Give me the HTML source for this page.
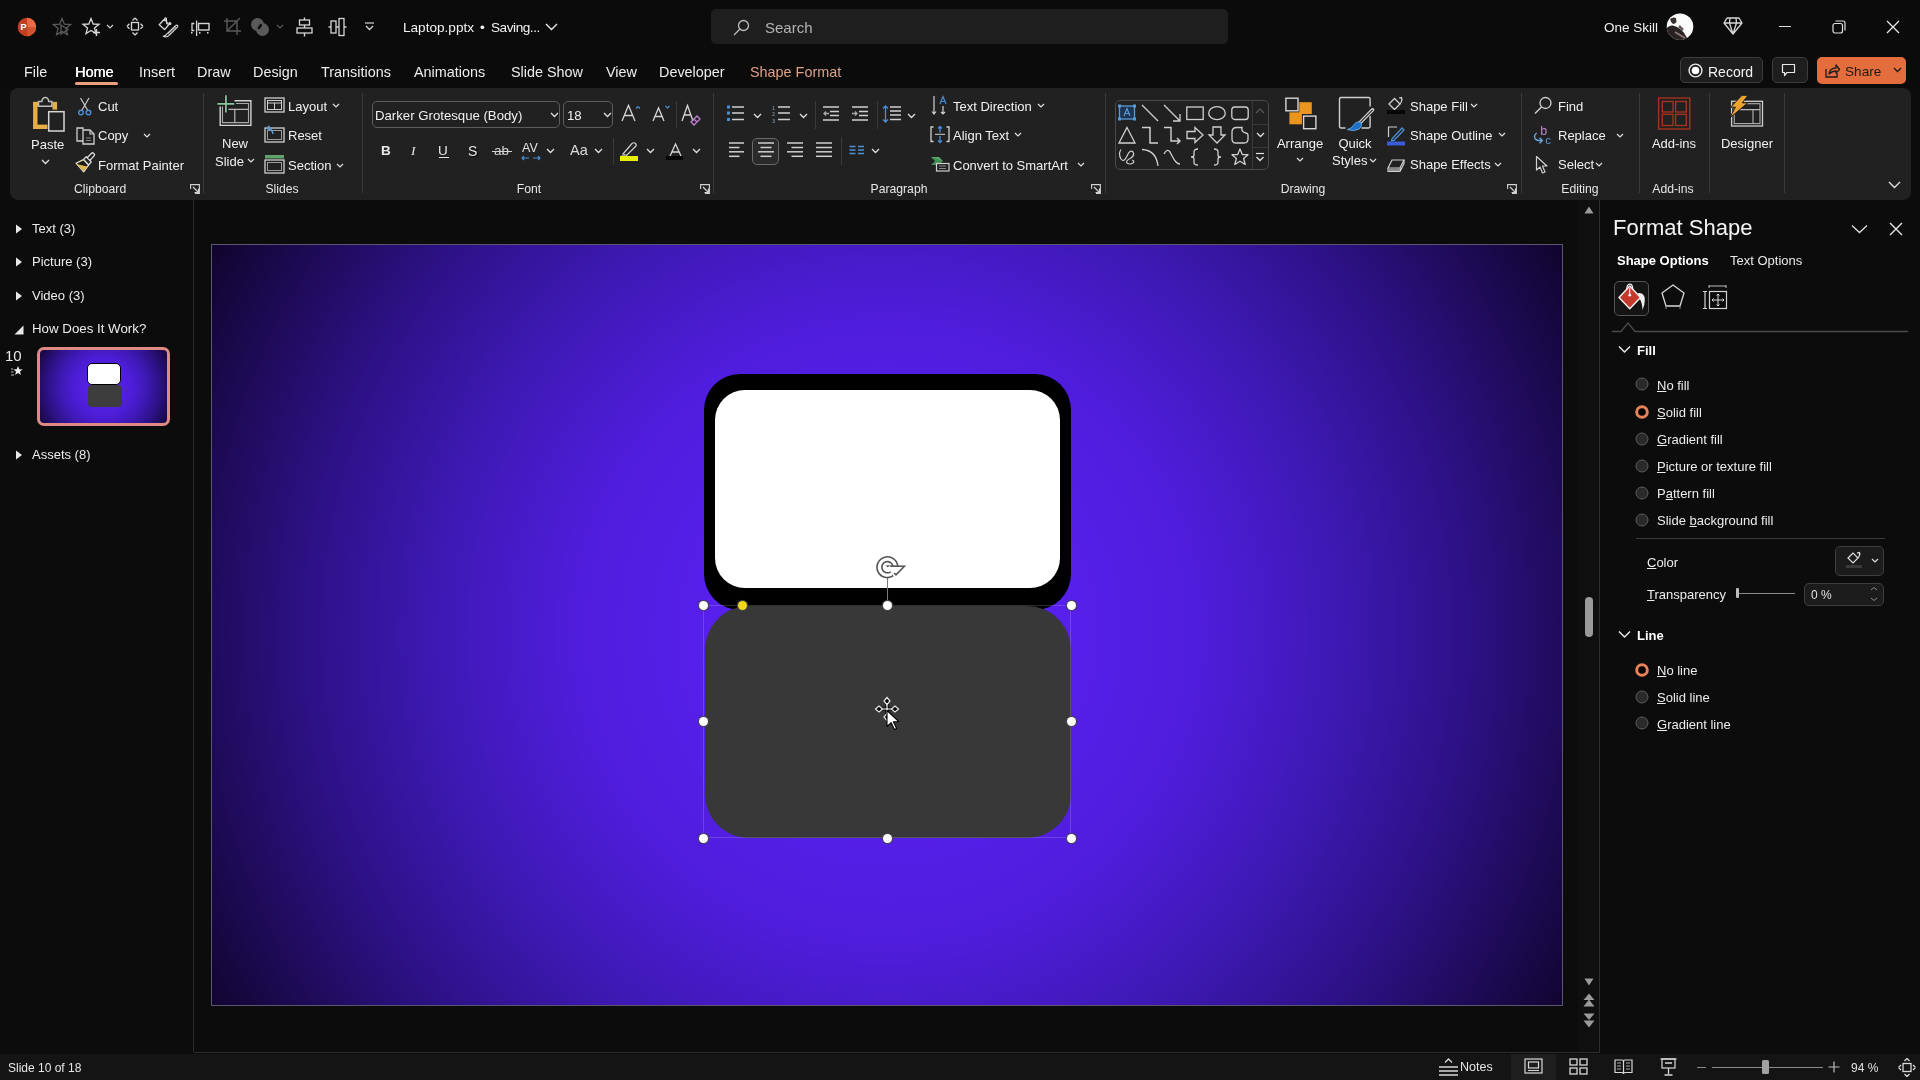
<!DOCTYPE html>
<html><head><meta charset="utf-8"><style>
html,body{margin:0;padding:0;width:1920px;height:1080px;overflow:hidden;background:#0c0c0c;}
body{position:relative;font-family:"Liberation Sans",sans-serif;}
.t{position:absolute;white-space:nowrap;line-height:1;font-family:"Liberation Sans",sans-serif;will-change:transform;}
.r{position:absolute;display:block;}
svg.r{overflow:visible}
</style></head><body>
<div class="r" style="left:0px;top:0px;width:1920px;height:88px;background:#0b0b0b"></div>
<div class="r" style="left:0px;top:88px;width:1920px;height:992px;background:#0c0c0c"></div>
<svg class="r" style="left:17px;top:17px;" width="20" height="20" viewBox="0 0 20 20"><circle cx="10" cy="10" r="9.2" fill="#c43e1c"/><path d="M10 0.8 A9.2 9.2 0 0 1 19.2 10 L10 10Z" fill="#ed6c47"/><path d="M19.2 10 A9.2 9.2 0 0 1 10 19.2 L10 10Z" fill="#d35230"/><rect x="1.5" y="5.5" width="9" height="9" rx="1" fill="#b7472a"/><text x="3.4" y="13.2" font-family="Liberation Sans" font-weight="700" font-size="9" fill="#fff">P</text></svg>
<svg class="r" style="left:52px;top:17px;" width="21" height="20" viewBox="0 0 21 20"><path d="M10 1.5 L12.4 7.2 L18.6 7.6 L13.9 11.6 L15.4 17.6 L10 14.4 L4.6 17.6 L6.1 11.6 L1.4 7.6 L7.6 7.2Z" fill="none" stroke="#5a5a5a" stroke-width="1.3"/><path d="M9 8 L16 12.5 L9 17Z" fill="none" stroke="#5a5a5a" stroke-width="1.3"/></svg>
<svg class="r" style="left:82px;top:17px;" width="20" height="20" viewBox="0 0 20 20"><path d="M9 1.5 L11.2 7 L17 7.3 L12.5 11 L14 16.5 L9 13.5 L4 16.5 L5.5 11 L1 7.3 L6.8 7Z" fill="none" stroke="#d6d6d6" stroke-width="1.3"/><path d="M14.5 12 V19 M11 15.5 H18" stroke="#d6d6d6" stroke-width="1.4"/></svg>
<svg class="r" style="left:106.0px;top:24.0px;" width="8" height="5.0" viewBox="0 0 8 5.0"><path d="M1 1 L4.0 4.0 L7 1" fill="none" stroke="#d6d6d6" stroke-width="1.1"/></svg>
<svg class="r" style="left:126px;top:17px;" width="18" height="19" viewBox="0 0 18 19"><rect x="5.5" y="5.5" width="7" height="7.5" fill="none" stroke="#d6d6d6" stroke-width="1.3"/><path d="M9 1 L6.5 3.5 M9 1 L11.5 3.5 M9 18 L6.5 15.5 M9 18 L11.5 15.5 M1 9.2 L3.5 6.7 M1 9.2 L3.5 11.7 M17 9.2 L14.5 6.7 M17 9.2 L14.5 11.7" stroke="#d6d6d6" stroke-width="1.3" fill="none"/></svg>
<svg class="r" style="left:155px;top:14px;" width="26" height="26" viewBox="0 0 26 26"><path d="M4.2 10.7 L9.6 5 L13.5 11 L9.6 15.6Z" fill="none" stroke="#d6d6d6" stroke-width="1.3" stroke-linejoin="round"/><path d="M9.7 5.2 Q10.4 3 11.3 4.2 L11.9 10.3" fill="none" stroke="#d6d6d6" stroke-width="1.2"/><circle cx="14.8" cy="9.6" r="1.6" fill="#d6d6d6"/><path d="M22.2 11.3 Q23.2 12 22.4 13.1 L14.2 21.2 Q12 24 8.2 22.3 Q11.2 21.6 12.2 19.6 L20.6 11.7 Q21.4 10.9 22.2 11.3Z" fill="none" stroke="#d6d6d6" stroke-width="1.2" stroke-linejoin="round"/><path d="M13 20 L21 12.8" stroke="#d6d6d6" stroke-width="0.8"/></svg>
<svg class="r" style="left:189px;top:18px;" width="22" height="20" viewBox="0 0 22 20"><path d="M7.6 2.5 V18" stroke="#d6d6d6" stroke-width="1.3"/><path d="M5.3 5.5 H3 V12.5 H5.3" fill="none" stroke="#d6d6d6" stroke-width="1.3"/><rect x="9.5" y="5.5" width="10.5" height="6.5" fill="none" stroke="#d6d6d6" stroke-width="1.4"/><rect x="2" y="14" width="1.5" height="1.6" fill="#d6d6d6"/><rect x="10" y="14" width="1.5" height="1.6" fill="#d6d6d6"/><rect x="18" y="14" width="1.5" height="1.6" fill="#d6d6d6"/></svg>
<svg class="r" style="left:223px;top:17px;" width="19" height="19" viewBox="0 0 19 19"><path d="M4 1 V14 H18 M1 4 H14 V18 M4 14 L17 1" fill="none" stroke="#5a5a5a" stroke-width="1.4"/></svg>
<svg class="r" style="left:250px;top:17px;" width="20" height="20" viewBox="0 0 20 20"><circle cx="7.5" cy="7.5" r="6.5" fill="#5a5a5a"/><circle cx="12.5" cy="12.5" r="6.5" fill="#5a5a5a"/><path d="M8.5 12 Q10 8 12 8" stroke="#0b0b0b" stroke-width="2.5"/></svg>
<svg class="r" style="left:276.0px;top:24.0px;" width="8" height="5.0" viewBox="0 0 8 5.0"><path d="M1 1 L4.0 4.0 L7 1" fill="none" stroke="#5a5a5a" stroke-width="1.1"/></svg>
<svg class="r" style="left:296px;top:17px;" width="17" height="20" viewBox="0 0 17 20"><path d="M8.5 0.5 V19.5" stroke="#d6d6d6" stroke-width="1.4"/><rect x="3.5" y="3" width="10" height="5" fill="#0b0b0b" stroke="#d6d6d6" stroke-width="1.3"/><rect x="1" y="11" width="15" height="5" fill="#0b0b0b" stroke="#d6d6d6" stroke-width="1.3"/></svg>
<svg class="r" style="left:328px;top:17px;" width="19" height="20" viewBox="0 0 19 20"><path d="M0.5 10 H18.5" stroke="#d6d6d6" stroke-width="1.4"/><rect x="3" y="4" width="5" height="12" fill="#0b0b0b" stroke="#d6d6d6" stroke-width="1.3"/><rect x="11" y="1.5" width="5" height="17" fill="#0b0b0b" stroke="#d6d6d6" stroke-width="1.3"/></svg>
<svg class="r" style="left:364px;top:22px;" width="11" height="9" viewBox="0 0 11 9"><path d="M1 1 H10" stroke="#d6d6d6" stroke-width="1.2"/><path d="M2 4 L5.5 7.5 L9 4" fill="none" stroke="#d6d6d6" stroke-width="1.3"/></svg>
<div class="t" style="left:403px;top:20.99px;font-size:13.6px;color:#f2f2f2;font-weight:400;">Laptop.pptx</div>
<div class="t" style="left:480px;top:20.99px;font-size:13.6px;color:#f2f2f2;font-weight:400;">•</div>
<div class="t" style="left:491px;top:20.99px;font-size:13.6px;color:#f2f2f2;font-weight:400;letter-spacing:-0.45px">Saving...</div>
<svg class="r" style="left:544.5px;top:23.25px;" width="13" height="7.5" viewBox="0 0 13 7.5"><path d="M1 1 L6.5 6.5 L12 1" fill="none" stroke="#e8e8e8" stroke-width="1.4"/></svg>
<div class="r" style="left:711px;top:9px;width:517px;height:35px;background:#1e1e1e;border-radius:5px"></div>
<svg class="r" style="left:733px;top:19px;" width="17" height="17" viewBox="0 0 17 17"><circle cx="10.5" cy="6.5" r="5" fill="none" stroke="#bdbdbd" stroke-width="1.3"/><path d="M7 10 L1 16" stroke="#bdbdbd" stroke-width="1.3"/></svg>
<div class="t" style="left:765px;top:19.80px;font-size:15px;color:#b4b4b4;font-weight:400;">Search</div>
<div class="t" style="left:1604px;top:20.57px;font-size:13.5px;color:#f0f0f0;font-weight:400;">One Skill</div>
<svg class="r" style="left:1666px;top:13px;" width="28" height="28" viewBox="0 0 28 28"><defs><clipPath id="av"><circle cx="14" cy="13.7" r="13.3"/></clipPath></defs><circle cx="14" cy="13.7" r="13.3" fill="#fafafa"/><g clip-path="url(#av)"><path d="M4 6 Q7 3.5 10 5 L10.5 9 Q9 11 7 11 Q5 10 4 6Z" fill="#3a3030"/><path d="M0 16 Q3 12 7 12.5 L11 14 Q15 16 18 20 L23 28 H0Z" fill="#2a2222"/><path d="M9 19 L19 25" stroke="#8a7878" stroke-width="2"/><path d="M13 13 L17 17" stroke="#6a5a5a" stroke-width="2.5"/></g></svg>
<svg class="r" style="left:1723px;top:17px;" width="20" height="18" viewBox="0 0 20 18"><path d="M4 1 H16 L19 6 L10 17 L1 6Z M1 6 H19 M7 1 L6.5 6 L10 17 L13.5 6 L13 1" fill="none" stroke="#d6d6d6" stroke-width="1.3" stroke-linejoin="round"/></svg>
<div class="r" style="left:1779px;top:26px;width:12px;height:1.2px;background:#e0e0e0"></div>
<svg class="r" style="left:1832px;top:20px;" width="14" height="14" viewBox="0 0 14 14"><rect x="1" y="3.5" width="9.5" height="9.5" rx="2" fill="none" stroke="#e0e0e0" stroke-width="1.2"/><path d="M3.5 1 H11 Q13 1 13 3 V10.5" fill="none" stroke="#e0e0e0" stroke-width="1.2"/></svg>
<svg class="r" style="left:1886px;top:20px;" width="14" height="14" viewBox="0 0 14 14"><path d="M1 1 L13 13 M13 1 L1 13" stroke="#e8e8e8" stroke-width="1.3"/></svg>
<div class="t" style="left:24px;top:65.01px;font-size:14.4px;color:#ededed;font-weight:400;">File</div>
<div class="t" style="left:75px;top:65.01px;font-size:14.4px;color:#ffffff;font-weight:400;text-shadow:0.4px 0 0 #fff">Home</div>
<div class="t" style="left:139px;top:65.01px;font-size:14.4px;color:#ededed;font-weight:400;">Insert</div>
<div class="t" style="left:197px;top:65.01px;font-size:14.4px;color:#ededed;font-weight:400;">Draw</div>
<div class="t" style="left:253px;top:65.01px;font-size:14.4px;color:#ededed;font-weight:400;">Design</div>
<div class="t" style="left:321px;top:65.01px;font-size:14.4px;color:#ededed;font-weight:400;">Transitions</div>
<div class="t" style="left:414px;top:65.01px;font-size:14.4px;color:#ededed;font-weight:400;">Animations</div>
<div class="t" style="left:511px;top:65.01px;font-size:14.4px;color:#ededed;font-weight:400;">Slide Show</div>
<div class="t" style="left:606px;top:65.01px;font-size:14.4px;color:#ededed;font-weight:400;">View</div>
<div class="t" style="left:659px;top:65.01px;font-size:14.4px;color:#ededed;font-weight:400;">Developer</div>
<div class="r" style="left:75px;top:81.5px;width:43px;height:3px;background:#e8a07e;border-radius:2px"></div>
<div class="t" style="left:750px;top:65.01px;font-size:14.4px;color:#dda287;font-weight:400;">Shape Format</div>
<div class="r" style="left:1680px;top:57px;width:83px;height:26px;background:#1e1e1e;border:1px solid #3c3c3c;border-radius:5px;box-sizing:border-box"></div>
<svg class="r" style="left:1688px;top:63px;" width="15" height="15" viewBox="0 0 15 15"><circle cx="7.5" cy="7.5" r="6.4" fill="none" stroke="#eaeaea" stroke-width="1.4"/><circle cx="7.5" cy="7.5" r="3.8" fill="#fff"/></svg>
<div class="t" style="left:1707.5px;top:64.65px;font-size:14px;color:#f2f2f2;font-weight:400;">Record</div>
<div class="r" style="left:1772px;top:57px;width:36px;height:26px;background:#1e1e1e;border:1px solid #3c3c3c;border-radius:5px;box-sizing:border-box"></div>
<svg class="r" style="left:1781px;top:63px;" width="15" height="14" viewBox="0 0 15 14"><path d="M1.5 1.5 H13.5 V9.5 H6 L3.5 12.5 V9.5 H1.5Z" fill="none" stroke="#e8e8e8" stroke-width="1.2" stroke-linejoin="round"/></svg>
<div class="r" style="left:1817px;top:57px;width:89px;height:27px;background:#e46d3d;border-radius:5px"></div>
<svg class="r" style="left:1825px;top:63px;" width="15" height="15" viewBox="0 0 15 15"><path d="M1 6 V14 H12 V10" fill="none" stroke="#1c1c1c" stroke-width="1.3"/><path d="M4 11 Q5 5 11 5 V2 L14.5 6.5 L11 10 V8 Q7 8 4 11Z" fill="none" stroke="#1c1c1c" stroke-width="1.3" stroke-linejoin="round"/></svg>
<div class="t" style="left:1844.5px;top:64.99px;font-size:13.6px;color:#1a1a1a;font-weight:400;">Share</div>
<svg class="r" style="left:1892.5px;top:66.75px;" width="9" height="5.5" viewBox="0 0 9 5.5"><path d="M1 1 L4.5 4.5 L8 1" fill="none" stroke="#1a1a1a" stroke-width="1.3"/></svg>
<div class="r" style="left:10px;top:88px;width:1901px;height:112px;background:#212121;border-radius:8px"></div>
<svg class="r" style="left:25px;top:90px;" width="45" height="45" viewBox="0 0 45 45"><g fill="#e9ad45"><rect x="8.1" y="11.9" width="4.4" height="27.1"/><rect x="8.1" y="34.6" width="14.4" height="4.4"/><rect x="8.1" y="11.9" width="5" height="4.2"/><rect x="27.5" y="11.9" width="4.6" height="7.7"/></g><path d="M13.5 16.3 V11.6 H16.8 Q17.4 7.6 20.3 7.6 Q23.2 7.6 23.8 11.6 H26.9 V16.3Z" fill="#212121" stroke="#bdbdbd" stroke-width="1.5"/><rect x="23.7" y="21.7" width="15.3" height="19.3" fill="#212121" stroke="#d6d6d6" stroke-width="1.5"/></svg>
<div class="t" style="left:30.5px;top:138.00px;font-size:13px;color:#f0f0f0;font-weight:400;">Paste</div>
<svg class="r" style="left:40.5px;top:158.75px;" width="9" height="5.5" viewBox="0 0 9 5.5"><path d="M1 1 L4.5 4.5 L8 1" fill="none" stroke="#e0e0e0" stroke-width="1.3"/></svg>
<svg class="r" style="left:77px;top:97px;" width="16" height="19" viewBox="0 0 16 19"><path d="M3.5 1 L10.5 13 M12 1 L5 13" stroke="#cfcfcf" stroke-width="1.2"/><circle cx="4" cy="15.5" r="2.3" fill="none" stroke="#4a8fd6" stroke-width="1.4"/><circle cx="11.5" cy="15.5" r="2.3" fill="none" stroke="#4a8fd6" stroke-width="1.4"/></svg>
<div class="t" style="left:98px;top:100.00px;font-size:13px;color:#f0f0f0;font-weight:400;">Cut</div>
<svg class="r" style="left:76px;top:126px;" width="19" height="19" viewBox="0 0 19 19"><path d="M7 3.5 V2 H1 V15 H7" fill="none" stroke="#cfcfcf" stroke-width="1.3"/><path d="M7 4 H14 L18 8 V18 H7Z" fill="none" stroke="#cfcfcf" stroke-width="1.3"/><path d="M14 4 V8 H18" fill="none" stroke="#cfcfcf" stroke-width="1.2"/><path d="M10 12 H15 M10 14.5 H15" stroke="#8a8a8a" stroke-width="1"/></svg>
<div class="t" style="left:98px;top:129.00px;font-size:13px;color:#f0f0f0;font-weight:400;">Copy</div>
<svg class="r" style="left:143.0px;top:133.0px;" width="8" height="5.0" viewBox="0 0 8 5.0"><path d="M1 1 L4.0 4.0 L7 1" fill="none" stroke="#e0e0e0" stroke-width="1.2"/></svg>
<svg class="r" style="left:70px;top:150px;" width="30" height="28" viewBox="0 0 30 28"><path d="M13.5 9.6 L6 13.2 L13.7 21.8 L18.6 15.2Z" fill="#1e1a14" stroke="#e8e4c8" stroke-width="1.2" stroke-linejoin="round"/><path d="M7.2 14.2 L17.2 16.6 L13.7 20.9Z" fill="#e3b54a"/><path d="M13.6 9.4 L16.2 6.8 L21.2 11.8 L18.6 15Z" fill="#212121" stroke="#dcdcdc" stroke-width="1.3" stroke-linejoin="round"/><path d="M17.2 7.8 L21.6 3.2 Q22.5 2.3 23.4 3.2 L24.2 4 Q25 4.9 24.1 5.8 L19.9 10.4" fill="none" stroke="#dcdcdc" stroke-width="1.3"/><path d="M18.8 8.9 L22.7 5" stroke="#151515" stroke-width="1.1"/></svg>
<div class="t" style="left:98px;top:158.50px;font-size:13px;color:#f0f0f0;font-weight:400;">Format Painter</div>
<div class="t" style="left:74px;top:182.67px;font-size:12.2px;color:#e6e6e6;font-weight:400;">Clipboard</div>
<svg class="r" style="left:189.5px;top:184px;" width="10" height="10" viewBox="0 0 10 10"><path d="M0.6 5 V0.6 H9.4 V9.4 H5" fill="none" stroke="#d0d0d0" stroke-width="1.1"/><path d="M3 3 L8.5 8.5 M8.5 4.5 V8.5 H4.5" fill="none" stroke="#d0d0d0" stroke-width="1.2"/></svg>
<div class="r" style="left:203px;top:93px;width:1px;height:100px;background:#3a3a3a"></div>
<svg class="r" style="left:210px;top:90px;" width="50" height="40" viewBox="0 0 50 40"><path d="M24.5 10.7 H40.9 V35.4 H10.2 V16.5" fill="none" stroke="#d4d4d4" stroke-width="1.4"/><path d="M26 13.5 H38.5 V32.6 H12.5 V16.5" fill="none" stroke="#a8a8a8" stroke-width="1.1"/><path d="M18.5 19.4 H38.5 M24.8 19.4 V32.6" stroke="#b8b8b8" stroke-width="1.2"/><path d="M15.9 5.2 V22.6 M7.4 13.9 H24.2" stroke="#1a1a1a" stroke-width="3.6"/><path d="M15.9 5.2 V22.6 M7.4 13.9 H24.2" stroke="#86c9a0" stroke-width="1.7"/></svg>
<div class="t" style="left:222px;top:137.00px;font-size:13px;color:#f0f0f0;font-weight:400;">New</div>
<div class="t" style="left:215px;top:154.50px;font-size:13px;color:#f0f0f0;font-weight:400;">Slide</div>
<svg class="r" style="left:247.0px;top:158.0px;" width="8" height="5.0" viewBox="0 0 8 5.0"><path d="M1 1 L4.0 4.0 L7 1" fill="none" stroke="#e0e0e0" stroke-width="1.2"/></svg>
<svg class="r" style="left:264px;top:97px;" width="21" height="17" viewBox="0 0 21 17"><rect x="1" y="1" width="19" height="14" fill="none" stroke="#cfcfcf" stroke-width="1.3"/><rect x="3.5" y="3.5" width="14" height="9" fill="none" stroke="#cfcfcf" stroke-width="1"/><path d="M10.5 6 V12.5 M3.5 6 H17.5" stroke="#cfcfcf" stroke-width="1"/></svg>
<div class="t" style="left:288px;top:100.00px;font-size:13px;color:#f0f0f0;font-weight:400;">Layout</div>
<svg class="r" style="left:332.0px;top:103.0px;" width="8" height="5.0" viewBox="0 0 8 5.0"><path d="M1 1 L4.0 4.0 L7 1" fill="none" stroke="#e0e0e0" stroke-width="1.2"/></svg>
<svg class="r" style="left:264px;top:125px;" width="21" height="18" viewBox="0 0 21 18"><rect x="1" y="3" width="19" height="14" fill="none" stroke="#cfcfcf" stroke-width="1.3"/><rect x="3.5" y="5.5" width="14" height="9" fill="none" stroke="#9a9a9a" stroke-width="1"/><path d="M9 9 Q8 3 3 3 M3 3 L5.5 0.8 M3 3 L5.5 5.5" fill="none" stroke="#5b9bd5" stroke-width="1.5"/></svg>
<div class="t" style="left:288px;top:129.00px;font-size:13px;color:#f0f0f0;font-weight:400;">Reset</div>
<svg class="r" style="left:264px;top:154px;" width="21" height="20" viewBox="0 0 21 20"><rect x="1" y="1" width="19" height="3.5" fill="#5fa36a"/><rect x="1" y="6" width="19" height="13" fill="none" stroke="#cfcfcf" stroke-width="1.3"/><rect x="3.5" y="8.5" width="14" height="8" fill="none" stroke="#9a9a9a" stroke-width="1"/></svg>
<div class="t" style="left:288px;top:158.50px;font-size:13px;color:#f0f0f0;font-weight:400;">Section</div>
<svg class="r" style="left:335.5px;top:162.5px;" width="8" height="5.0" viewBox="0 0 8 5.0"><path d="M1 1 L4.0 4.0 L7 1" fill="none" stroke="#e0e0e0" stroke-width="1.2"/></svg>
<div class="t" style="left:-18px;width:600px;text-align:center;top:182.67px;font-size:12.2px;color:#e6e6e6;font-weight:400;">Slides</div>
<div class="r" style="left:362px;top:93px;width:1px;height:100px;background:#3a3a3a"></div>
<div class="r" style="left:372px;top:101px;width:188px;height:27px;border:1px solid #5c5c5c;border-radius:5px;box-sizing:border-box"></div>
<div class="t" style="left:375px;top:108.83px;font-size:13.2px;color:#f0f0f0;font-weight:400;">Darker Grotesque (Body)</div>
<svg class="r" style="left:549.5px;top:112.25px;" width="9" height="5.5" viewBox="0 0 9 5.5"><path d="M1 1 L4.5 4.5 L8 1" fill="none" stroke="#e0e0e0" stroke-width="1.3"/></svg>
<div class="r" style="left:563px;top:101px;width:50px;height:27px;border:1px solid #5c5c5c;border-radius:5px;box-sizing:border-box"></div>
<div class="t" style="left:567px;top:108.83px;font-size:13.2px;color:#f0f0f0;font-weight:400;">18</div>
<svg class="r" style="left:603.0px;top:112.25px;" width="9" height="5.5" viewBox="0 0 9 5.5"><path d="M1 1 L4.5 4.5 L8 1" fill="none" stroke="#e0e0e0" stroke-width="1.3"/></svg>
<svg class="r" style="left:621px;top:104px;" width="20" height="18" viewBox="0 0 20 18"><path d="M1 17 L7.5 1.5 L14 17 M3.5 11.5 H11.5" fill="none" stroke="#d6d6d6" stroke-width="1.3"/><path d="M15 4.5 L17 2.5 L19 4.5" fill="none" stroke="#4a8fd6" stroke-width="1.2"/></svg>
<svg class="r" style="left:652px;top:104px;" width="18" height="18" viewBox="0 0 18 18"><path d="M1 17 L6.5 4 L12 17 M3 12.5 H10" fill="none" stroke="#d6d6d6" stroke-width="1.3"/><path d="M13.5 2 L15.5 4 L17.5 2" fill="none" stroke="#4a8fd6" stroke-width="1.2"/></svg>
<div class="r" style="left:675.5px;top:101px;width:1px;height:27px;background:#3a3a3a"></div>
<svg class="r" style="left:681px;top:104px;" width="20" height="20" viewBox="0 0 20 20"><path d="M1 17 L6.5 1.5 L12 17 M3 11 H10" fill="none" stroke="#d6d6d6" stroke-width="1.3"/><path d="M10 18 L16 12 L19 15 L13 21Z M13 15 L16 18" fill="none" stroke="#c77ed8" stroke-width="1.3"/></svg>
<div class="r" style="left:713px;top:93px;width:1px;height:100px;background:#3a3a3a"></div>
<div class="t" style="left:381px;top:143.57px;font-size:13.5px;color:#e8e8e8;font-weight:400;"><b>B</b></div>
<div class="t" style="left:411px;top:143.57px;font-size:13.5px;color:#e8e8e8;font-weight:400;font-family:Liberation Serif"><i>I</i></div>
<div class="t" style="left:438px;top:143.57px;font-size:13.5px;color:#e8e8e8;font-weight:400;">U</div>
<div class="r" style="left:438.5px;top:157px;width:10px;height:1.2px;background:#e0e0e0"></div>
<div class="t" style="left:468px;top:143.65px;font-size:14px;color:#e8e8e8;font-weight:400;text-shadow:1px 1px 1px #000">S</div>
<div class="t" style="left:494px;top:143.57px;font-size:13.5px;color:#d6d6d6;font-weight:400;">ab</div>
<div class="r" style="left:492px;top:150.5px;width:20px;height:1.2px;background:#d6d6d6"></div>
<div class="t" style="left:522px;top:142.42px;font-size:12.5px;color:#e0e0e0;font-weight:400;">AV</div>
<svg class="r" style="left:521px;top:155px;" width="20" height="6" viewBox="0 0 20 6"><path d="M1 3 H8 M3 1 L1 3 L3 5 M12 3 H19 M17 1 L19 3 L17 5" fill="none" stroke="#4a8fd6" stroke-width="1.1"/></svg>
<svg class="r" style="left:546.0px;top:148.25px;" width="9" height="5.5" viewBox="0 0 9 5.5"><path d="M1 1 L4.5 4.5 L8 1" fill="none" stroke="#e0e0e0" stroke-width="1.3"/></svg>
<div class="t" style="left:570px;top:143.23px;font-size:14.5px;color:#dcdcdc;font-weight:400;">Aa</div>
<svg class="r" style="left:593.5px;top:148.25px;" width="9" height="5.5" viewBox="0 0 9 5.5"><path d="M1 1 L4.5 4.5 L8 1" fill="none" stroke="#e0e0e0" stroke-width="1.3"/></svg>
<div class="r" style="left:613px;top:138px;width:1px;height:27px;background:#3a3a3a"></div>
<svg class="r" style="left:619px;top:141px;" width="20" height="21" viewBox="0 0 20 21"><path d="M4 13 L13 2.5 Q15 1 16.5 2.5 Q18 4 16.5 5.5 L7.5 14.5Z" fill="none" stroke="#cfcfcf" stroke-width="1.2"/><path d="M4 13 L2 15 L5.5 15.5 L7.5 14.5" fill="#8c8c8c"/><rect x="1" y="15" width="18" height="5" fill="#e8f000"/></svg>
<svg class="r" style="left:646.0px;top:148.25px;" width="9" height="5.5" viewBox="0 0 9 5.5"><path d="M1 1 L4.5 4.5 L8 1" fill="none" stroke="#e0e0e0" stroke-width="1.3"/></svg>
<svg class="r" style="left:669px;top:143px;" width="13" height="14" viewBox="0 0 13 14"><path d="M1 13 L6.5 1 L12 13 M3 9 H10" fill="none" stroke="#d6d6d6" stroke-width="1.3"/></svg>
<div class="r" style="left:666px;top:156px;width:17px;height:4px;background:#050505"></div>
<svg class="r" style="left:691.5px;top:148.25px;" width="9" height="5.5" viewBox="0 0 9 5.5"><path d="M1 1 L4.5 4.5 L8 1" fill="none" stroke="#e0e0e0" stroke-width="1.3"/></svg>
<div class="t" style="left:229px;width:600px;text-align:center;top:182.67px;font-size:12.2px;color:#e6e6e6;font-weight:400;">Font</div>
<svg class="r" style="left:700px;top:184px;" width="10" height="10" viewBox="0 0 10 10"><path d="M0.6 5 V0.6 H9.4 V9.4 H5" fill="none" stroke="#d0d0d0" stroke-width="1.1"/><path d="M3 3 L8.5 8.5 M8.5 4.5 V8.5 H4.5" fill="none" stroke="#d0d0d0" stroke-width="1.2"/></svg>
<svg class="r" style="left:726px;top:104px;" width="20" height="20" viewBox="0 0 20 20"><rect x="1" y="1.5" width="3" height="3" fill="#4a8fd6"/><rect x="1" y="7.5" width="3" height="3" fill="#4a8fd6"/><rect x="1" y="14" width="3" height="3" fill="#4a8fd6"/><path d="M6 3 H18 M6 9 H18 M6 15.5 H18" stroke="#cfcfcf" stroke-width="1.5"/></svg>
<svg class="r" style="left:753.0px;top:112.75px;" width="9" height="5.5" viewBox="0 0 9 5.5"><path d="M1 1 L4.5 4.5 L8 1" fill="none" stroke="#e0e0e0" stroke-width="1.3"/></svg>
<svg class="r" style="left:772px;top:104px;" width="20" height="20" viewBox="0 0 20 20"><text x="0" y="6" font-size="5.5" fill="#8aa0b8" font-family="Liberation Sans">1</text><text x="0" y="12" font-size="5.5" fill="#8aa0b8" font-family="Liberation Sans">2</text><text x="0" y="18.5" font-size="5.5" fill="#8aa0b8" font-family="Liberation Sans">3</text><path d="M6 3 H18 M6 9 H18 M6 15.5 H18" stroke="#cfcfcf" stroke-width="1.5"/></svg>
<svg class="r" style="left:799.0px;top:112.75px;" width="9" height="5.5" viewBox="0 0 9 5.5"><path d="M1 1 L4.5 4.5 L8 1" fill="none" stroke="#e0e0e0" stroke-width="1.3"/></svg>
<div class="r" style="left:814.5px;top:101px;width:1px;height:28px;background:#3a3a3a"></div>
<svg class="r" style="left:822px;top:104px;" width="18" height="20" viewBox="0 0 18 20"><path d="M1 3 H17 M8 7.5 H17 M8 11.5 H17 M1 16 H17" stroke="#cfcfcf" stroke-width="1.4"/><path d="M2 9.5 H7 M4 7.5 L2 9.5 L4 11.5" fill="none" stroke="#a8a8a8" stroke-width="1.3"/></svg>
<svg class="r" style="left:851px;top:104px;" width="18" height="20" viewBox="0 0 18 20"><path d="M1 3 H17 M8 7.5 H17 M8 11.5 H17 M1 16 H17" stroke="#cfcfcf" stroke-width="1.4"/><path d="M1 9.5 H6 M4 7.5 L6 9.5 L4 11.5" fill="none" stroke="#a8a8a8" stroke-width="1.3"/></svg>
<div class="r" style="left:876.5px;top:101px;width:1px;height:28px;background:#3a3a3a"></div>
<svg class="r" style="left:882px;top:104px;" width="20" height="22" viewBox="0 0 20 22"><path d="M8 3 H19 M8 7 H19 M8 11 H19 M8 15.5 H19" stroke="#cfcfcf" stroke-width="1.4"/><path d="M3.5 2 V18 M1 4.5 L3.5 2 L6 4.5 M1 15.5 L3.5 18 L6 15.5" fill="none" stroke="#4a8fd6" stroke-width="1.3"/></svg>
<svg class="r" style="left:907.0px;top:112.75px;" width="9" height="5.5" viewBox="0 0 9 5.5"><path d="M1 1 L4.5 4.5 L8 1" fill="none" stroke="#e0e0e0" stroke-width="1.3"/></svg>
<svg class="r" style="left:728px;top:140px;" width="18" height="20" viewBox="0 0 18 20"><path d="M1 3 H16" stroke="#cfcfcf" stroke-width="1.5"/><path d="M1 7.5 H11.5" stroke="#cfcfcf" stroke-width="1.5"/><path d="M1 11.8 H16" stroke="#cfcfcf" stroke-width="1.5"/><path d="M1 16.3 H11.5" stroke="#cfcfcf" stroke-width="1.5"/></svg>
<div class="r" style="left:752px;top:137.5px;width:27px;height:27px;border:1px solid #6a6a6a;border-radius:5px;box-sizing:border-box;background:#2a2a2a"></div>
<svg class="r" style="left:757px;top:140px;" width="18" height="20" viewBox="0 0 18 20"><path d="M1 3 H17" stroke="#cfcfcf" stroke-width="1.5"/><path d="M3.5 7.5 H14.5" stroke="#cfcfcf" stroke-width="1.5"/><path d="M1 11.8 H17" stroke="#cfcfcf" stroke-width="1.5"/><path d="M3.5 16.3 H14.5" stroke="#cfcfcf" stroke-width="1.5"/></svg>
<svg class="r" style="left:786px;top:140px;" width="18" height="20" viewBox="0 0 18 20"><path d="M1 3 H17" stroke="#cfcfcf" stroke-width="1.5"/><path d="M5.5 7.5 H17" stroke="#cfcfcf" stroke-width="1.5"/><path d="M1 11.8 H17" stroke="#cfcfcf" stroke-width="1.5"/><path d="M5.5 16.3 H17" stroke="#cfcfcf" stroke-width="1.5"/></svg>
<svg class="r" style="left:815px;top:140px;" width="18" height="20" viewBox="0 0 18 20"><path d="M1 3 H17" stroke="#cfcfcf" stroke-width="1.5"/><path d="M1 7.5 H17" stroke="#cfcfcf" stroke-width="1.5"/><path d="M1 11.8 H17" stroke="#cfcfcf" stroke-width="1.5"/><path d="M1 16.3 H17" stroke="#cfcfcf" stroke-width="1.5"/></svg>
<div class="r" style="left:840.5px;top:137px;width:1px;height:28px;background:#3a3a3a"></div>
<svg class="r" style="left:849px;top:145px;" width="16" height="11" viewBox="0 0 16 11"><path d="M0.5 1.5 H6.5 M9 1.5 H15 M0.5 5 H6.5 M9 5 H15 M0.5 8.5 H6.5 M9 8.5 H15" stroke="#4a8fd6" stroke-width="1.4"/></svg>
<svg class="r" style="left:871.0px;top:148.25px;" width="9" height="5.5" viewBox="0 0 9 5.5"><path d="M1 1 L4.5 4.5 L8 1" fill="none" stroke="#e0e0e0" stroke-width="1.3"/></svg>
<svg class="r" style="left:931px;top:95px;" width="18" height="21" viewBox="0 0 18 21"><path d="M3 1 V19 M1 16.5 L3 19 L5 16.5" fill="none" stroke="#cfcfcf" stroke-width="1.2"/><path d="M9 9 L12 1.5 L15 9 M10 6.5 H14" fill="none" stroke="#4a8fd6" stroke-width="1.2"/><path d="M12 11 V19 M10 17 L12 19 L14 17" fill="none" stroke="#cfcfcf" stroke-width="1.2"/></svg>
<div class="t" style="left:953px;top:100.00px;font-size:13px;color:#f0f0f0;font-weight:400;">Text Direction</div>
<svg class="r" style="left:1037.0px;top:103.0px;" width="8" height="5.0" viewBox="0 0 8 5.0"><path d="M1 1 L4.0 4.0 L7 1" fill="none" stroke="#e0e0e0" stroke-width="1.2"/></svg>
<svg class="r" style="left:930px;top:125px;" width="20" height="19" viewBox="0 0 20 19"><path d="M3.5 2 H1 V16.5 H3.5 M16.5 2 H19 V16.5 H16.5" fill="none" stroke="#cfcfcf" stroke-width="1.3"/><path d="M5 9.3 H15" stroke="#cfcfcf" stroke-width="1"/><path d="M10 1.5 V7.5 M8 3.5 L10 1.5 L12 3.5 M10 11 V17.5 M8 15.5 L10 17.5 L12 15.5" fill="none" stroke="#4a8fd6" stroke-width="1.3"/></svg>
<div class="t" style="left:953px;top:129.00px;font-size:13px;color:#f0f0f0;font-weight:400;">Align Text</div>
<svg class="r" style="left:1014.0px;top:132.0px;" width="8" height="5.0" viewBox="0 0 8 5.0"><path d="M1 1 L4.0 4.0 L7 1" fill="none" stroke="#e0e0e0" stroke-width="1.2"/></svg>
<svg class="r" style="left:930px;top:156px;" width="20" height="16" viewBox="0 0 20 16"><path d="M1 1 H9 L13 5 H9 L4 8 L6 5Z" fill="#58a866"/><path d="M1 1 L5 5 L1 9 H9 L13 5" fill="#3f8f52"/><rect x="6.5" y="7.5" width="12.5" height="7.5" fill="#212121" stroke="#cfcfcf" stroke-width="1.2"/><path d="M9 10 H16 M9 12.5 H16" stroke="#8a8a8a" stroke-width="1"/></svg>
<div class="t" style="left:953px;top:158.50px;font-size:13px;color:#f0f0f0;font-weight:400;">Convert to SmartArt</div>
<svg class="r" style="left:1077.0px;top:162.0px;" width="8" height="5.0" viewBox="0 0 8 5.0"><path d="M1 1 L4.0 4.0 L7 1" fill="none" stroke="#e0e0e0" stroke-width="1.2"/></svg>
<div class="t" style="left:599px;width:600px;text-align:center;top:182.67px;font-size:12.2px;color:#e6e6e6;font-weight:400;">Paragraph</div>
<svg class="r" style="left:1091px;top:184px;" width="10" height="10" viewBox="0 0 10 10"><path d="M0.6 5 V0.6 H9.4 V9.4 H5" fill="none" stroke="#d0d0d0" stroke-width="1.1"/><path d="M3 3 L8.5 8.5 M8.5 4.5 V8.5 H4.5" fill="none" stroke="#d0d0d0" stroke-width="1.2"/></svg>
<div class="r" style="left:1104.5px;top:93px;width:1px;height:100px;background:#3a3a3a"></div>
<div class="r" style="left:1114.5px;top:100px;width:154px;height:70px;border:1px solid #4a4a4a;border-radius:5px;box-sizing:border-box"></div>
<div class="r" style="left:1251.5px;top:101px;width:1px;height:68px;background:#3a3a3a"></div>
<div class="r" style="left:1252px;top:123.5px;width:16px;height:1px;background:#3a3a3a"></div>
<div class="r" style="left:1252px;top:146.5px;width:16px;height:1px;background:#3a3a3a"></div>
<svg class="r" style="left:1255px;top:108px;" width="10" height="6" viewBox="0 0 10 6"><path d="M1 5 L5 1 L9 5" fill="none" stroke="#5a5a5a" stroke-width="1.2"/></svg>
<svg class="r" style="left:1255.5px;top:132.25px;" width="9" height="5.5" viewBox="0 0 9 5.5"><path d="M1 1 L4.5 4.5 L8 1" fill="none" stroke="#e0e0e0" stroke-width="1.3"/></svg>
<svg class="r" style="left:1255px;top:152px;" width="10" height="10" viewBox="0 0 10 10"><path d="M1 1.5 H9" stroke="#e0e0e0" stroke-width="1.2"/><path d="M1.5 5 L5 8.5 L8.5 5" fill="none" stroke="#e0e0e0" stroke-width="1.3"/></svg>
<svg class="r" style="left:1118px;top:103.5px;" width="18" height="18" viewBox="0 0 18 18"><rect x="1.5" y="2" width="15" height="13" fill="#1d3552" stroke="#5b9bd5" stroke-width="1.3"/><rect x="0" y="0.5" width="3" height="3" fill="#5b9bd5"/><rect x="15" y="0.5" width="3" height="3" fill="#5b9bd5"/><rect x="0" y="13.5" width="3" height="3" fill="#5b9bd5"/><rect x="15" y="13.5" width="3" height="3" fill="#5b9bd5"/><path d="M6 12 L9 4.5 L12 12 M7 9.5 H11" fill="none" stroke="#5b9bd5" stroke-width="1.2"/></svg>
<svg class="r" style="left:1141px;top:103.5px;" width="18" height="18" viewBox="0 0 18 18"><path d="M1 1 L17 17" stroke="#d0d0d0" stroke-width="1.3"/></svg>
<svg class="r" style="left:1163px;top:103.5px;" width="18" height="18" viewBox="0 0 18 18"><path d="M1 1 L17 17 M17 10 V17 H10" fill="none" stroke="#d0d0d0" stroke-width="1.3"/></svg>
<svg class="r" style="left:1185.5px;top:103.5px;" width="18" height="18" viewBox="0 0 18 18"><rect x="0.8" y="3" width="16.4" height="12.5" fill="none" stroke="#d0d0d0" stroke-width="1.3"/></svg>
<svg class="r" style="left:1208px;top:103.5px;" width="18" height="18" viewBox="0 0 18 18"><ellipse cx="9" cy="9.2" rx="8.3" ry="6.5" fill="none" stroke="#d0d0d0" stroke-width="1.3"/></svg>
<svg class="r" style="left:1230.5px;top:103.5px;" width="18" height="18" viewBox="0 0 18 18"><rect x="0.8" y="3" width="16.4" height="12.5" rx="3" fill="none" stroke="#d0d0d0" stroke-width="1.3"/></svg>
<svg class="r" style="left:1118px;top:126px;" width="18" height="18" viewBox="0 0 18 18"><path d="M9 1.5 L17 17 H1Z" fill="none" stroke="#d0d0d0" stroke-width="1.3"/></svg>
<svg class="r" style="left:1141px;top:126px;" width="18" height="18" viewBox="0 0 18 18"><path d="M1 1.5 H9 V17 H17" fill="none" stroke="#d0d0d0" stroke-width="1.5"/></svg>
<svg class="r" style="left:1163px;top:126px;" width="18" height="18" viewBox="0 0 18 18"><path d="M1 1.5 H8 V15 H17 M14 12 L17 15 L14 18" fill="none" stroke="#d0d0d0" stroke-width="1.4"/></svg>
<svg class="r" style="left:1185.5px;top:126px;" width="18" height="18" viewBox="0 0 18 18"><path d="M1 5.5 H9 V1.5 L17 9 L9 16.5 V12.5 H1Z" fill="none" stroke="#d0d0d0" stroke-width="1.3"/></svg>
<svg class="r" style="left:1208px;top:126px;" width="18" height="18" viewBox="0 0 18 18"><path d="M5 1 H13 V9 H17 L9 17 L1 9 H5Z" fill="none" stroke="#d0d0d0" stroke-width="1.3"/></svg>
<svg class="r" style="left:1230.5px;top:126px;" width="18" height="18" viewBox="0 0 18 18"><path d="M1 6 Q1 1.5 5.5 1.5 H11 Q10 6 15 7 Q17 7.5 17 9 V13 Q17 17 13 17 H5 Q1 17 1 13Z" fill="none" stroke="#d0d0d0" stroke-width="1.3"/></svg>
<svg class="r" style="left:1118px;top:148px;" width="18" height="18" viewBox="0 0 18 18"><path d="M3 1.5 Q0 6 3 11 Q6 15 9 8 Q12 1 15 4 Q17 7 13 10 Q7 13 9 15 Q12 17 15 15 Q17 13 14 12" fill="none" stroke="#d0d0d0" stroke-width="1.2"/></svg>
<svg class="r" style="left:1141px;top:148px;" width="18" height="18" viewBox="0 0 18 18"><path d="M1 1.5 Q15 2 17 18" fill="none" stroke="#d0d0d0" stroke-width="1.3"/></svg>
<svg class="r" style="left:1163px;top:148px;" width="18" height="18" viewBox="0 0 18 18"><path d="M1 6 Q4 0 7 4 Q11 12 13 14 Q15 16 17 16" fill="none" stroke="#d0d0d0" stroke-width="1.3"/></svg>
<svg class="r" style="left:1185.5px;top:148px;" width="18" height="18" viewBox="0 0 18 18"><path d="M12 1 Q8 1 8 4 V7 Q8 9 5 9 Q8 9 8 11 V14.5 Q8 17 12 17" fill="none" stroke="#d0d0d0" stroke-width="1.3"/></svg>
<svg class="r" style="left:1208px;top:148px;" width="18" height="18" viewBox="0 0 18 18"><path d="M6 1 Q10 1 10 4 V7 Q10 9 13 9 Q10 9 10 11 V14.5 Q10 17 6 17" fill="none" stroke="#d0d0d0" stroke-width="1.3"/></svg>
<svg class="r" style="left:1230.5px;top:148px;" width="18" height="18" viewBox="0 0 18 18"><path d="M9 1 L11.3 6.5 L17 6.7 L12.6 10.5 L14.2 16.5 L9 13.2 L3.8 16.5 L5.4 10.5 L1 6.7 L6.7 6.5Z" fill="none" stroke="#d0d0d0" stroke-width="1.3" stroke-linejoin="round"/></svg>
<svg class="r" style="left:1280px;top:92px;" width="40" height="40" viewBox="0 0 40 40"><rect x="19.3" y="10.2" width="12.5" height="11.8" fill="#ea951f"/><rect x="9.4" y="20.3" width="12.5" height="12" fill="#ea951f"/><rect x="5.9" y="6.2" width="12.1" height="12.6" fill="#212121" stroke="#d8d8d8" stroke-width="1.4"/><rect x="23.6" y="24.1" width="12.3" height="12.6" fill="#212121" stroke="#d8d8d8" stroke-width="1.4"/></svg>
<div class="t" style="left:1000px;width:600px;text-align:center;top:136.50px;font-size:13px;color:#f0f0f0;font-weight:400;">Arrange</div>
<svg class="r" style="left:1296.0px;top:157.0px;" width="8" height="5.0" viewBox="0 0 8 5.0"><path d="M1 1 L4.0 4.0 L7 1" fill="none" stroke="#e0e0e0" stroke-width="1.2"/></svg>
<svg class="r" style="left:1330px;top:92px;" width="50" height="45" viewBox="0 0 50 45"><path d="M15.5 36 H10.9 Q9.5 36 9.5 34.6 V6.9 Q9.5 5.5 10.9 5.5 H38.7 Q40.1 5.5 40.1 6.9 V14.5 M40.1 24 V34.6 Q40.1 36 38.7 36 H31.5" fill="none" stroke="#cfcfcf" stroke-width="1.4"/><path d="M42.6 17.8 L29.5 31.2" stroke="#d6d6d6" stroke-width="3.4" stroke-linecap="round"/><path d="M42.3 18.1 L29.8 30.9" stroke="#212121" stroke-width="1.1" stroke-linecap="round"/><path d="M30.8 30.2 Q33 34 29.2 37 Q24 39.8 17.3 37.6 Q22 36.3 23.9 32.8 Q26 29 30.8 30.2Z" fill="#1f6fc4" stroke="#6aaee8" stroke-width="0.9"/></svg>
<div class="t" style="left:1055px;width:600px;text-align:center;top:136.50px;font-size:13px;color:#f0f0f0;font-weight:400;">Quick</div>
<div class="t" style="left:1331.5px;top:154.00px;font-size:13px;color:#f0f0f0;font-weight:400;">Styles</div>
<svg class="r" style="left:1369.0px;top:157.5px;" width="8" height="5.0" viewBox="0 0 8 5.0"><path d="M1 1 L4.0 4.0 L7 1" fill="none" stroke="#e0e0e0" stroke-width="1.2"/></svg>
<svg class="r" style="left:1387px;top:96px;" width="19" height="19" viewBox="0 0 19 19"><path d="M2 8 L7.5 2.5 L13 8 L7.5 13.5Z" fill="none" stroke="#d0d0d0" stroke-width="1.3"/><path d="M13 8 Q16 4 14 2 M12 2 L14.5 1.5 L15 4" fill="none" stroke="#d0d0d0" stroke-width="1.2"/><rect x="0" y="14" width="18" height="4" fill="#050505"/></svg>
<div class="t" style="left:1410px;top:100.00px;font-size:13px;color:#f0f0f0;font-weight:400;">Shape Fill</div>
<svg class="r" style="left:1470.0px;top:103.0px;" width="8" height="5.0" viewBox="0 0 8 5.0"><path d="M1 1 L4.0 4.0 L7 1" fill="none" stroke="#e0e0e0" stroke-width="1.2"/></svg>
<svg class="r" style="left:1387px;top:125px;" width="19" height="21" viewBox="0 0 19 21"><path d="M10 2 H1.5 V12" fill="none" stroke="#cfcfcf" stroke-width="1.2"/><path d="M5 14 L15 3 L17 5 L7 15.5 L4.5 16Z" fill="none" stroke="#4a8fd6" stroke-width="1.3"/><rect x="0" y="16.5" width="18" height="4" fill="#3b5bd6"/></svg>
<div class="t" style="left:1410px;top:129.00px;font-size:13px;color:#f0f0f0;font-weight:400;">Shape Outline</div>
<svg class="r" style="left:1497.5px;top:132.0px;" width="8" height="5.0" viewBox="0 0 8 5.0"><path d="M1 1 L4.0 4.0 L7 1" fill="none" stroke="#e0e0e0" stroke-width="1.2"/></svg>
<svg class="r" style="left:1387px;top:156px;" width="19" height="17" viewBox="0 0 19 17"><path d="M1 12 L5 4 H17 L13 12Z" fill="none" stroke="#d0d0d0" stroke-width="1.2"/><path d="M1 12 V15.5 H13 L17 7.5 V4 M13 12 V15.5" fill="none" stroke="#d0d0d0" stroke-width="1.2"/><path d="M1.5 12.5 H13 V15 H1.5Z" fill="#8c8c8c"/></svg>
<div class="t" style="left:1410px;top:158.20px;font-size:13px;color:#f0f0f0;font-weight:400;">Shape Effects</div>
<svg class="r" style="left:1493.5px;top:161.5px;" width="8" height="5.0" viewBox="0 0 8 5.0"><path d="M1 1 L4.0 4.0 L7 1" fill="none" stroke="#e0e0e0" stroke-width="1.2"/></svg>
<div class="t" style="left:1003px;width:600px;text-align:center;top:182.67px;font-size:12.2px;color:#e6e6e6;font-weight:400;">Drawing</div>
<svg class="r" style="left:1507px;top:184px;" width="10" height="10" viewBox="0 0 10 10"><path d="M0.6 5 V0.6 H9.4 V9.4 H5" fill="none" stroke="#d0d0d0" stroke-width="1.1"/><path d="M3 3 L8.5 8.5 M8.5 4.5 V8.5 H4.5" fill="none" stroke="#d0d0d0" stroke-width="1.2"/></svg>
<div class="r" style="left:1520.5px;top:93px;width:1px;height:100px;background:#3a3a3a"></div>
<svg class="r" style="left:1534px;top:96px;" width="19" height="19" viewBox="0 0 19 19"><circle cx="11.5" cy="7" r="5.5" fill="none" stroke="#cfcfcf" stroke-width="1.3"/><path d="M7.5 11 L1 17.5" stroke="#cfcfcf" stroke-width="1.4"/></svg>
<div class="t" style="left:1557.5px;top:100.00px;font-size:13px;color:#f0f0f0;font-weight:400;">Find</div>
<svg class="r" style="left:1528px;top:120px;" width="28" height="28" viewBox="0 0 28 28"><text x="12.2" y="15.4" font-size="12.5" fill="#c08ad0" font-family="Liberation Sans">b</text><text x="17.3" y="24.2" font-size="11.5" fill="#5b9bd5" font-family="Liberation Sans">c</text><path d="M8.8 13 Q5.2 15.5 7.3 19 Q8.8 20.8 14 20.6" fill="none" stroke="#6aa6dc" stroke-width="1.4"/><path d="M11.6 17.8 L14.3 20.6 L11.6 23.3" fill="none" stroke="#6aa6dc" stroke-width="1.5"/></svg>
<div class="t" style="left:1557.5px;top:129.00px;font-size:13px;color:#f0f0f0;font-weight:400;">Replace</div>
<svg class="r" style="left:1615.5px;top:132.5px;" width="8" height="5.0" viewBox="0 0 8 5.0"><path d="M1 1 L4.0 4.0 L7 1" fill="none" stroke="#e0e0e0" stroke-width="1.2"/></svg>
<svg class="r" style="left:1535px;top:155px;" width="14" height="19" viewBox="0 0 14 19"><path d="M1.5 1.5 L12 11 H7.5 L10 17 L7.5 18 L5 12 L1.5 15Z" fill="none" stroke="#d0d0d0" stroke-width="1.2" stroke-linejoin="round"/></svg>
<div class="t" style="left:1557.5px;top:158.40px;font-size:13px;color:#f0f0f0;font-weight:400;">Select</div>
<svg class="r" style="left:1595.0px;top:161.5px;" width="8" height="5.0" viewBox="0 0 8 5.0"><path d="M1 1 L4.0 4.0 L7 1" fill="none" stroke="#e0e0e0" stroke-width="1.2"/></svg>
<div class="t" style="left:1279.5px;width:600px;text-align:center;top:182.97px;font-size:12.2px;color:#e6e6e6;font-weight:400;">Editing</div>
<div class="r" style="left:1638.5px;top:93px;width:1px;height:100px;background:#3a3a3a"></div>
<svg class="r" style="left:1650px;top:90px;" width="45" height="45" viewBox="0 0 45 45"><g fill="none" stroke="#a23420" stroke-width="1.4"><rect x="8.6" y="8" width="31.2" height="31"/><rect x="12.3" y="11.5" width="10.7" height="10.5"/><rect x="25.6" y="11.5" width="10.7" height="10.5"/><rect x="12.3" y="24.3" width="10.7" height="11.2"/><rect x="25.6" y="24.3" width="10.7" height="11.2"/></g></svg>
<div class="t" style="left:1373.5px;width:600px;text-align:center;top:136.50px;font-size:13px;color:#f0f0f0;font-weight:400;">Add-ins</div>
<div class="t" style="left:1373px;width:600px;text-align:center;top:182.97px;font-size:12.2px;color:#e6e6e6;font-weight:400;">Add-ins</div>
<div class="r" style="left:1708.5px;top:93px;width:1px;height:100px;background:#3a3a3a"></div>
<svg class="r" style="left:1720px;top:90px;" width="50" height="45" viewBox="0 0 50 45"><rect x="11.6" y="11.3" width="30.9" height="24.7" fill="none" stroke="#d0d0d0" stroke-width="1.3"/><rect x="14.2" y="13.7" width="25.8" height="19.9" fill="none" stroke="#b0b0b0" stroke-width="1.1"/><path d="M14.2 19.6 H40 M33 19.6 V33.6" stroke="#b8b8b8" stroke-width="1.1"/><path d="M22 5.3 L28 5.3 L22.3 12.8 L27.8 12.8 L9.6 28.2 L15.4 17.2 L10.6 17.2Z" fill="#eda330" stroke="#1c1c1c" stroke-width="1" stroke-linejoin="round"/></svg>
<div class="t" style="left:1446.5px;width:600px;text-align:center;top:136.50px;font-size:13px;color:#f0f0f0;font-weight:400;">Designer</div>
<div class="r" style="left:1784px;top:93px;width:1px;height:100px;background:#3a3a3a"></div>
<svg class="r" style="left:1888.0px;top:181.25px;" width="13" height="7.5" viewBox="0 0 13 7.5"><path d="M1 1 L6.5 6.5 L12 1" fill="none" stroke="#e0e0e0" stroke-width="1.4"/></svg>
<div class="r" style="left:193px;top:200px;width:1px;height:852px;background:#2a2a2a"></div>
<svg class="r" style="left:15px;top:223.5px;" width="8" height="10" viewBox="0 0 8 10"><path d="M1 0.5 L7 5 L1 9.5Z" fill="#e8e8e8"/></svg>
<div class="t" style="left:31.8px;top:222.00px;font-size:13px;color:#ececec;font-weight:400;">Text (3)</div>
<svg class="r" style="left:15px;top:256.5px;" width="8" height="10" viewBox="0 0 8 10"><path d="M1 0.5 L7 5 L1 9.5Z" fill="#e8e8e8"/></svg>
<div class="t" style="left:31.8px;top:255.00px;font-size:13px;color:#ececec;font-weight:400;">Picture (3)</div>
<svg class="r" style="left:15px;top:290.5px;" width="8" height="10" viewBox="0 0 8 10"><path d="M1 0.5 L7 5 L1 9.5Z" fill="#e8e8e8"/></svg>
<div class="t" style="left:31.8px;top:289.00px;font-size:13px;color:#ececec;font-weight:400;">Video (3)</div>
<svg class="r" style="left:15px;top:449.7px;" width="8" height="10" viewBox="0 0 8 10"><path d="M1 0.5 L7 5 L1 9.5Z" fill="#e8e8e8"/></svg>
<div class="t" style="left:31.8px;top:448.20px;font-size:13px;color:#ececec;font-weight:400;">Assets (8)</div>
<svg class="r" style="left:14px;top:325px;" width="10" height="10" viewBox="0 0 10 10"><path d="M9.5 0.5 V9.5 H0.5Z" fill="#e8e8e8"/></svg>
<div class="t" style="left:31.8px;top:322.04px;font-size:13.3px;color:#ececec;font-weight:400;">How Does It Work?</div>
<div class="t" style="left:5px;top:348.00px;font-size:15px;color:#e8e8e8;font-weight:400;">10</div>
<svg class="r" style="left:10px;top:365px;" width="13" height="12" viewBox="0 0 13 12"><path d="M8 1 L9.3 4.3 L12.6 4.4 L10 6.6 L10.9 10 L8 8 L5.1 10 L6 6.6 L3.4 4.4 L6.7 4.3Z" fill="#f0f0f0"/><path d="M1 4 H3 M1 7 H3.5 M1 10 H4" stroke="#bdbdbd" stroke-width="1"/></svg>
<div class="r" style="left:37px;top:347px;width:133px;height:79px;border:3px solid #e08a86;border-radius:7px;box-sizing:border-box;background:radial-gradient(circle 74px at 50% 51%, #5a22f0 0%, #5621e8 20%, #4c1dd6 40%, #3e19b4 58%, #2e1288 75%, #1e0b58 90%, #14063a 100%);overflow:hidden"></div>
<div class="r" style="left:87.5px;top:384.5px;width:34px;height:22px;background:#3d3d3d;border-radius:4px"></div>
<div class="r" style="left:86.5px;top:362.5px;width:34.5px;height:22.5px;background:#fff;border:1.8px solid #000;border-radius:5px;box-sizing:border-box"></div>
<div class="r" style="left:212px;top:245px;width:1350px;height:760px;background:radial-gradient(circle 775px at 50% 51%, #5b20f5 0%, #5820ee 20%, #4f1ddc 40%, #3e19b4 58%, #2d1186 75%, #1c0a52 90%, #11042e 100%);box-shadow:0 0 0 1px #5a5570"></div>
<div class="r" style="left:704px;top:374px;width:367px;height:236px;background:#000;border-radius:36px"></div>
<div class="r" style="left:715px;top:390px;width:345px;height:198px;background:#fff;border-radius:30px"></div>
<div class="r" style="left:705.2px;top:605.5px;width:366.3px;height:232.5px;background:#383838;border-radius:44px"></div>
<div class="r" style="left:703px;top:605px;width:368px;height:233px;border:1px solid rgba(200,200,230,0.22);box-sizing:border-box"></div>
<div class="r" style="left:887px;top:578px;width:1px;height:27px;background:#7a7a7a"></div>
<svg class="r" style="left:872px;top:553px;" width="36" height="30" viewBox="0 0 36 30"><path d="M19.99 20.75 A8 8 0 1 1 23.37 13.5" fill="none" stroke="#555" stroke-width="6.4"/><path d="M19.99 20.75 A8 8 0 1 1 23.37 13.5" fill="none" stroke="#fff" stroke-width="3.2"/><path d="M15.6 13 L32.4 13.3 L24 21.8Z" fill="#fff" stroke="#555" stroke-width="1.6" stroke-linejoin="miter"/><path d="M16.5 13.8 L22.5 19.8" stroke="#fff" stroke-width="3"/></svg>
<div class="r" style="left:698.5px;top:600.5px;width:9px;height:9px;background:#fff;border-radius:50%;box-shadow:0 0 0 1.3px rgba(70,70,70,0.85)"></div>
<div class="r" style="left:882.5px;top:600.5px;width:9px;height:9px;background:#fff;border-radius:50%;box-shadow:0 0 0 1.3px rgba(70,70,70,0.85)"></div>
<div class="r" style="left:1066.5px;top:600.5px;width:9px;height:9px;background:#fff;border-radius:50%;box-shadow:0 0 0 1.3px rgba(70,70,70,0.85)"></div>
<div class="r" style="left:698.5px;top:717.0px;width:9px;height:9px;background:#fff;border-radius:50%;box-shadow:0 0 0 1.3px rgba(70,70,70,0.85)"></div>
<div class="r" style="left:1066.5px;top:717.0px;width:9px;height:9px;background:#fff;border-radius:50%;box-shadow:0 0 0 1.3px rgba(70,70,70,0.85)"></div>
<div class="r" style="left:698.5px;top:833.5px;width:9px;height:9px;background:#fff;border-radius:50%;box-shadow:0 0 0 1.3px rgba(70,70,70,0.85)"></div>
<div class="r" style="left:882.5px;top:833.5px;width:9px;height:9px;background:#fff;border-radius:50%;box-shadow:0 0 0 1.3px rgba(70,70,70,0.85)"></div>
<div class="r" style="left:1066.5px;top:833.5px;width:9px;height:9px;background:#fff;border-radius:50%;box-shadow:0 0 0 1.3px rgba(70,70,70,0.85)"></div>
<div class="r" style="left:737.5px;top:600.5px;width:9px;height:9px;background:#f0d81c;border-radius:50%;box-shadow:0 0 0 1.3px rgba(70,70,70,0.85)"></div>
<svg class="r" style="left:874px;top:697px;" width="30" height="36" viewBox="0 0 30 36"><g transform="translate(13,12)"><path d="M0 -9 V9 M-9 0 H9" stroke="#000" stroke-width="3.2"/><path d="M0 -9 V9 M-9 0 H9" stroke="#fff" stroke-width="1.2"/><path d="M0 -11.5 L3 -8 L0 -4.5 L-3 -8Z M0 11.5 L3 8 L0 4.5 L-3 8Z M-11.5 0 L-8 3 L-4.5 0 L-8 -3Z M11.5 0 L8 3 L4.5 0 L8 -3Z" fill="#000" stroke="#e8e8e8" stroke-width="1.2"/></g><path d="M13 13.5 V29.5 L17.2 25.7 L20.4 32.5 L22.6 31.5 L19.4 24.7 L24.8 24.7Z" fill="#fff" stroke="#000" stroke-width="1.1" stroke-linejoin="round"/></svg>
<div class="r" style="left:1578px;top:200px;width:21px;height:852px;background:#0f0f0f"></div>
<svg class="r" style="left:1584px;top:206px;" width="10" height="8" viewBox="0 0 10 8"><path d="M5 0.5 L9.5 7.5 H0.5Z" fill="#9a9a9a"/></svg>
<div class="r" style="left:1585px;top:597px;width:8px;height:40px;background:#9a9a9a;border-radius:4px"></div>
<svg class="r" style="left:1584px;top:978px;" width="10" height="8" viewBox="0 0 10 8"><path d="M0.5 0.5 H9.5 L5 7.5Z" fill="#9a9a9a"/></svg>
<svg class="r" style="left:1583px;top:993px;" width="12" height="15" viewBox="0 0 12 15"><path d="M6 0.5 L11.5 7 H0.5Z M6 6.5 L11.5 13.5 H0.5Z" fill="#9a9a9a"/></svg>
<svg class="r" style="left:1583px;top:1013px;" width="12" height="15" viewBox="0 0 12 15"><path d="M0.5 0.5 H11.5 L6 7Z M0.5 7.5 H11.5 L6 14.5Z" fill="#9a9a9a"/></svg>
<div class="r" style="left:1599px;top:200px;width:1px;height:852px;background:#2e2e2e"></div>
<div class="t" style="left:1613px;top:217.08px;font-size:22px;color:#f4f4f4;font-weight:400;">Format Shape</div>
<svg class="r" style="left:1851px;top:224px;" width="17" height="10" viewBox="0 0 17 10"><path d="M1 1.5 L8.5 8.5 L16 1.5" fill="none" stroke="#e0e0e0" stroke-width="1.3"/></svg>
<svg class="r" style="left:1889px;top:222px;" width="14" height="14" viewBox="0 0 14 14"><path d="M1 1 L13 13 M13 1 L1 13" stroke="#e8e8e8" stroke-width="1.4"/></svg>
<div class="t" style="left:1617px;top:254.20px;font-size:13px;color:#ffffff;font-weight:700;">Shape Options</div>
<div class="t" style="left:1730px;top:254.20px;font-size:13px;color:#e8e8e8;font-weight:400;">Text Options</div>
<div class="r" style="left:1614px;top:280.5px;width:35px;height:35px;border:1px solid #555;border-radius:5px;box-sizing:border-box;background:#141414"></div>
<svg class="r" style="left:1616px;top:282px;" width="32" height="32" viewBox="0 0 32 32"><path d="M22 11 Q28.5 10 28.8 17.5 Q29 23.5 26.3 28 Q26.5 21 23.5 16.5Z" fill="#f0f0f0"/><path d="M13.75 4 L24.5 15.4 L13.75 26.75 L3 15.4Z" fill="#c4392c" stroke="#f4f4f4" stroke-width="1.4" stroke-linejoin="round"/><path d="M10.8 7.5 Q10.8 2.2 13.75 2.2 Q16.7 2.2 16.7 7.5" fill="none" stroke="#f0f0f0" stroke-width="1.3"/><path d="M13.75 6 V12.5" stroke="#f0f0f0" stroke-width="1.1"/><circle cx="13.75" cy="13.2" r="1.4" fill="#f4f4f4"/></svg>
<svg class="r" style="left:1661px;top:284px;" width="24" height="26" viewBox="0 0 24 26"><path d="M12 1 L23 9 L19 22 H5 L1 9Z" fill="none" stroke="#d6d6d6" stroke-width="1.3" stroke-linejoin="round"/><path d="M5 22 V25 M19 22 V25" stroke="#8a8a8a" stroke-width="1"/></svg>
<svg class="r" style="left:1702px;top:285px;" width="26" height="25" viewBox="0 0 26 25"><path d="M7 1 H24 M7 0 V3 M24 0 V3" stroke="#bdbdbd" stroke-width="1"/><rect x="7.5" y="6.5" width="17" height="17" fill="none" stroke="#d6d6d6" stroke-width="1.2"/><path d="M1 6.5 H5 M3 6.5 V23.5 M1 23.5 H5" stroke="#d6d6d6" stroke-width="1.2"/><path d="M16 9 V21 M10 15 H22 M14.5 10.5 L16 9 L17.5 10.5 M14.5 19.5 L16 21 L17.5 19.5 M11.5 13.5 L10 15 L11.5 16.5 M20.5 13.5 L22 15 L20.5 16.5" fill="none" stroke="#d6d6d6" stroke-width="1"/></svg>
<svg class="r" style="left:1612px;top:320px;" width="296" height="13" viewBox="0 0 296 13"><path d="M0 11.5 H9 L16 3 L23 11.5 H296" fill="none" stroke="#4a4a4a" stroke-width="1.3"/></svg>
<svg class="r" style="left:1618px;top:345px;" width="13" height="9" viewBox="0 0 13 9"><path d="M1 1.5 L6.5 7 L12 1.5" fill="none" stroke="#e8e8e8" stroke-width="1.5"/></svg>
<div class="t" style="left:1637px;top:343.80px;font-size:13px;color:#ffffff;font-weight:700;">Fill</div>
<svg class="r" style="left:1635px;top:377.4px;" width="14" height="14" viewBox="0 0 14 14"><circle cx="7" cy="7" r="6" fill="#2a2a2a" stroke="#5c5c5c" stroke-width="1"/></svg>
<div class="t" style="left:1656.8px;top:378.90px;font-size:13px;color:#ececec;font-weight:400;text-decoration:none"><u>N</u>o fill</div>
<svg class="r" style="left:1635px;top:404.5px;" width="14" height="14" viewBox="0 0 14 14"><circle cx="7" cy="7" r="5.3" fill="#000" stroke="#e8825a" stroke-width="3"/></svg>
<div class="t" style="left:1656.8px;top:406.00px;font-size:13px;color:#ececec;font-weight:400;text-decoration:none"><u>S</u>olid fill</div>
<svg class="r" style="left:1635px;top:431.5px;" width="14" height="14" viewBox="0 0 14 14"><circle cx="7" cy="7" r="6" fill="#2a2a2a" stroke="#5c5c5c" stroke-width="1"/></svg>
<div class="t" style="left:1656.8px;top:433.00px;font-size:13px;color:#ececec;font-weight:400;text-decoration:none"><u>G</u>radient fill</div>
<svg class="r" style="left:1635px;top:458.5px;" width="14" height="14" viewBox="0 0 14 14"><circle cx="7" cy="7" r="6" fill="#2a2a2a" stroke="#5c5c5c" stroke-width="1"/></svg>
<div class="t" style="left:1656.8px;top:460.00px;font-size:13px;color:#ececec;font-weight:400;text-decoration:none"><u>P</u>icture or texture fill</div>
<svg class="r" style="left:1635px;top:485.5px;" width="14" height="14" viewBox="0 0 14 14"><circle cx="7" cy="7" r="6" fill="#2a2a2a" stroke="#5c5c5c" stroke-width="1"/></svg>
<div class="t" style="left:1656.8px;top:487.00px;font-size:13px;color:#ececec;font-weight:400;text-decoration:none">P<u>a</u>ttern fill</div>
<svg class="r" style="left:1635px;top:512.5px;" width="14" height="14" viewBox="0 0 14 14"><circle cx="7" cy="7" r="6" fill="#2a2a2a" stroke="#5c5c5c" stroke-width="1"/></svg>
<div class="t" style="left:1656.8px;top:514.00px;font-size:13px;color:#ececec;font-weight:400;text-decoration:none">Slide <u>b</u>ackground fill</div>
<div class="r" style="left:1636px;top:537.5px;width:249px;height:1px;background:#3c3c3c"></div>
<div class="t" style="left:1647px;top:555.70px;font-size:13px;color:#ececec;font-weight:400;"><u>C</u>olor</div>
<div class="r" style="left:1835px;top:545.5px;width:49px;height:30px;border:1px solid #3e3e3e;border-radius:5px;box-sizing:border-box;background:#1c1c1c"></div>
<svg class="r" style="left:1846px;top:551px;" width="16" height="17" viewBox="0 0 16 17"><path d="M2 7 L7 2 L12 7 L7 12Z" fill="none" stroke="#e0e0e0" stroke-width="1.2"/><path d="M12 7 Q14.5 4 13 2 M11 2 L13.5 1.5 L14 4" fill="none" stroke="#e0e0e0" stroke-width="1.1"/><rect x="0" y="14" width="16" height="3" fill="#3a3a3a"/></svg>
<svg class="r" style="left:1871.0px;top:557.5px;" width="8" height="5.0" viewBox="0 0 8 5.0"><path d="M1 1 L4.0 4.0 L7 1" fill="none" stroke="#e0e0e0" stroke-width="1.2"/></svg>
<div class="t" style="left:1647px;top:588.30px;font-size:13px;color:#ececec;font-weight:400;"><u>T</u>ransparency</div>
<div class="r" style="left:1736px;top:592.5px;width:59px;height:1px;background:#8a8a8a"></div>
<div class="r" style="left:1736px;top:588px;width:3px;height:10px;background:#bdbdbd;border-radius:1px"></div>
<div class="r" style="left:1804px;top:583px;width:80px;height:23px;border:1px solid #3e3e3e;border-radius:5px;box-sizing:border-box;background:#1c1c1c"></div>
<div class="t" style="left:1811px;top:588.84px;font-size:12px;color:#e0e0e0;font-weight:400;">0 %</div>
<svg class="r" style="left:1869px;top:586px;" width="10" height="16" viewBox="0 0 10 16"><path d="M2 4 L5 1.5 L8 4 M2 12 L5 14.5 L8 12" fill="none" stroke="#8a8a8a" stroke-width="1"/></svg>
<svg class="r" style="left:1618px;top:630px;" width="13" height="9" viewBox="0 0 13 9"><path d="M1 1.5 L6.5 7 L12 1.5" fill="none" stroke="#e8e8e8" stroke-width="1.5"/></svg>
<div class="t" style="left:1636.7px;top:629.00px;font-size:13px;color:#ffffff;font-weight:700;">Line</div>
<svg class="r" style="left:1635px;top:662.5px;" width="14" height="14" viewBox="0 0 14 14"><circle cx="7" cy="7" r="5.3" fill="#000" stroke="#e8825a" stroke-width="3"/></svg>
<div class="t" style="left:1656.8px;top:664.00px;font-size:13px;color:#ececec;font-weight:400;text-decoration:none"><u>N</u>o line</div>
<svg class="r" style="left:1635px;top:689.5px;" width="14" height="14" viewBox="0 0 14 14"><circle cx="7" cy="7" r="6" fill="#2a2a2a" stroke="#5c5c5c" stroke-width="1"/></svg>
<div class="t" style="left:1656.8px;top:691.00px;font-size:13px;color:#ececec;font-weight:400;text-decoration:none"><u>S</u>olid line</div>
<svg class="r" style="left:1635px;top:716px;" width="14" height="14" viewBox="0 0 14 14"><circle cx="7" cy="7" r="6" fill="#2a2a2a" stroke="#5c5c5c" stroke-width="1"/></svg>
<div class="t" style="left:1656.8px;top:717.50px;font-size:13px;color:#ececec;font-weight:400;text-decoration:none"><u>G</u>radient line</div>
<div class="r" style="left:194px;top:1052px;width:1406px;height:1px;background:#2c2c2c"></div>
<div class="r" style="left:0px;top:1053.5px;width:1920px;height:26.5px;background:#141414"></div>
<div class="t" style="left:8.25px;top:1061.84px;font-size:12px;color:#e6e6e6;font-weight:400;">Slide 10 of 18</div>
<svg class="r" style="left:1438px;top:1057px;" width="22" height="20" viewBox="0 0 22 20"><path d="M1 10 H20 M1 14 H20 M1 18 H20" stroke="#d8d8d8" stroke-width="1.3"/><path d="M7 5.5 L10.5 2 L14 5.5" fill="none" stroke="#d8d8d8" stroke-width="1.3"/></svg>
<div class="t" style="left:1460px;top:1061.42px;font-size:12.5px;color:#e6e6e6;font-weight:400;">Notes</div>
<div class="r" style="left:1511px;top:1054px;width:45px;height:26px;background:#1e1e1e"></div>
<svg class="r" style="left:1524px;top:1058px;" width="19" height="17" viewBox="0 0 19 17"><rect x="1" y="1" width="17" height="14" fill="none" stroke="#d8d8d8" stroke-width="1.2"/><rect x="4.5" y="4" width="10" height="6" fill="none" stroke="#d8d8d8" stroke-width="1.2"/><path d="M4 12.5 H15" stroke="#d8d8d8" stroke-width="1"/></svg>
<svg class="r" style="left:1569px;top:1058px;" width="19" height="17" viewBox="0 0 19 17"><rect x="1" y="1" width="7" height="6" fill="none" stroke="#d8d8d8" stroke-width="1.3"/><rect x="11" y="1" width="7" height="6" fill="none" stroke="#d8d8d8" stroke-width="1.3"/><rect x="1" y="10" width="7" height="6" fill="none" stroke="#d8d8d8" stroke-width="1.3"/><rect x="11" y="10" width="7" height="6" fill="none" stroke="#d8d8d8" stroke-width="1.3"/></svg>
<svg class="r" style="left:1614px;top:1058px;" width="19" height="17" viewBox="0 0 19 17"><path d="M1 2 H8 Q9.5 2 9.5 3.5 V16 Q9.5 14.5 8 14.5 H1Z M18 2 H11 Q9.5 2 9.5 3.5 V16 Q9.5 14.5 11 14.5 H18Z" fill="none" stroke="#d8d8d8" stroke-width="1.2"/><path d="M3 5 H7 M3 8 H7 M3 11 H7 M12 5 H16 M12 8 H16 M12 11 H16" stroke="#a8a8a8" stroke-width="1"/></svg>
<svg class="r" style="left:1660px;top:1058px;" width="17" height="18" viewBox="0 0 17 18"><path d="M0.5 1 H16.5" stroke="#d8d8d8" stroke-width="1.3"/><rect x="2" y="1" width="13" height="9" fill="none" stroke="#d8d8d8" stroke-width="1.2"/><path d="M5 5 H12 M8.5 10 V16 M4.5 17 H12.5" stroke="#d8d8d8" stroke-width="1.3"/></svg>
<div class="r" style="left:1697px;top:1066.5px;width:9px;height:1.2px;background:#8a8a8a"></div>
<div class="r" style="left:1712px;top:1066.5px;width:111px;height:1px;background:#8a8a8a"></div>
<div class="r" style="left:1762px;top:1060px;width:6.5px;height:14px;background:#a0a0a0;border-radius:1.5px"></div>
<svg class="r" style="left:1828px;top:1061px;" width="12" height="12" viewBox="0 0 12 12"><path d="M6 0.5 V11.5 M0.5 6 H11.5" stroke="#bdbdbd" stroke-width="1.2"/></svg>
<div class="t" style="left:1851px;top:1061.84px;font-size:12px;color:#e0e0e0;font-weight:400;">94 %</div>
<svg class="r" style="left:1898px;top:1058px;" width="18" height="19" viewBox="0 0 18 19"><rect x="5" y="5.5" width="8" height="8" fill="none" stroke="#d8d8d8" stroke-width="1.3"/><path d="M9 0.5 L6.5 3 M9 0.5 L11.5 3 M9 18.5 L6.5 16 M9 18.5 L11.5 16 M0.5 9.5 L3 7 M0.5 9.5 L3 12 M17.5 9.5 L15 7 M17.5 9.5 L15 12" stroke="#d8d8d8" stroke-width="1.3" fill="none"/></svg>
</body></html>
